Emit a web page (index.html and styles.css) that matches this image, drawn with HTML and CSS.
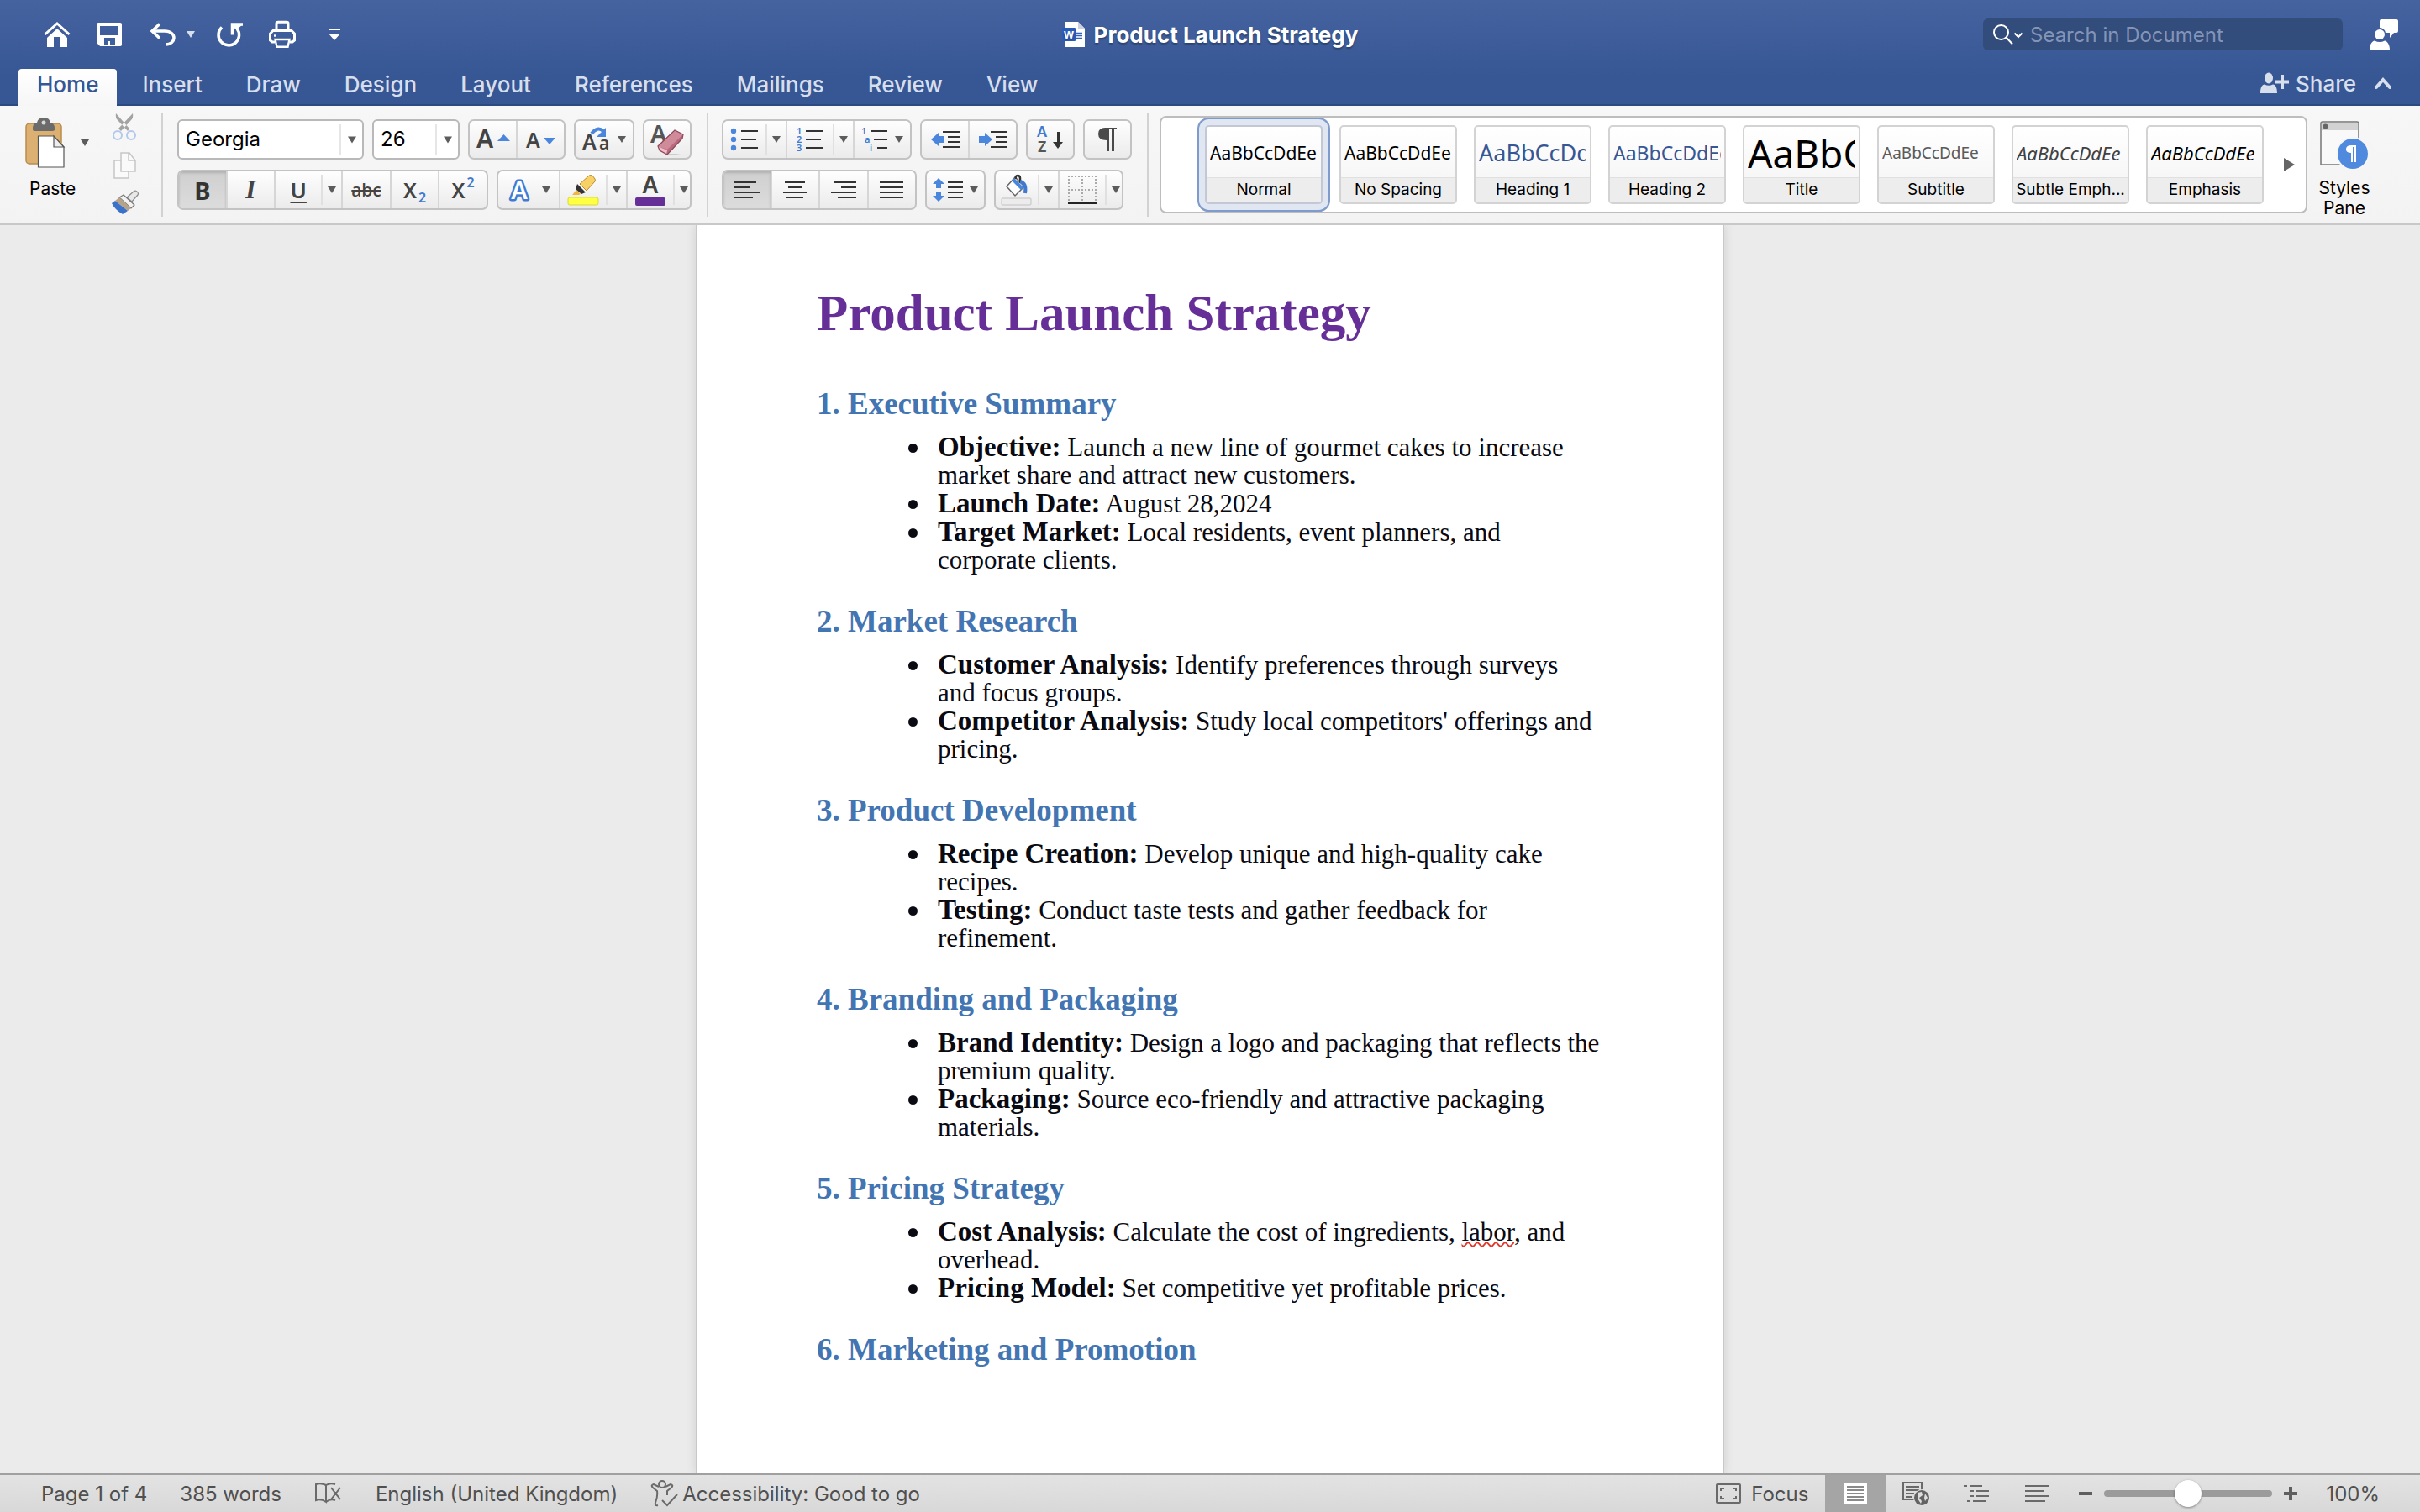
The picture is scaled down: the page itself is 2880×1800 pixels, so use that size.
FILE: index.html
```html
<!DOCTYPE html>
<html lang="en-GB">
<head>
	<meta charset="utf-8">
	<title>Product Launch Strategy</title>
	<link rel="stylesheet" href="styles.css">
</head>
<body>
	<svg class="defs" width="0" height="0" aria-hidden="true">
		<symbol id="caret" viewBox="0 0 10 8"><path d="M0 0h10L5 8z" fill="currentColor"/></symbol>
	</svg>

	<header class="top">
		<div class="titlebar">
			<div class="quick">
				<button class="q-home" aria-label="Home">
					<svg width="32" height="30" viewBox="0 0 32 30"><path d="M1.500 15L16 2l14.500 13" fill="none" stroke="#fff" stroke-width="3"/><path d="M16 8l12 11v11h-8V18h-8v12H4V19z" fill="#fff"/></svg>
				</button>
				<button class="q-save" aria-label="Save">
					<svg width="30" height="28" viewBox="0 0 30 28"><path d="M2 2h26v24H5l-3-3z" fill="none" stroke="#fff" stroke-width="4" stroke-linejoin="round"/><path d="M2 15h26v12H4l-2-2z" fill="#fff"/><path d="M9 25v-7h13v8h-6v-4h-3v4h-4z" fill="#3f5f9d"/></svg>
				</button>
				<button class="q-undo" aria-label="Undo">
					<svg width="32" height="28" viewBox="0 0 32 28"><path d="M12 1.500L3 10l9 8.500M3 10h15c15 0 14 16 1 16" fill="none" stroke="#fff" stroke-width="3.500"/></svg>
				</button>
				<button class="q-more" aria-label="Undo history"><svg width="10" height="8"><use href="#caret"/></svg></button>
				<button class="q-redo" aria-label="Repeat">
					<svg width="32" height="32" viewBox="0 0 32 32"><path d="M6 7.500A12.300 12.300 0 1 0 24 9L20 5" fill="none" stroke="#fff" stroke-width="3.500"/><path d="M18.500 16.500V4H31" fill="none" stroke="#fff" stroke-width="3.500"/><path d="M19 4h12l-7 6z" fill="#fff"/></svg>
				</button>
				<button class="q-print" aria-label="Print">
					<svg width="32" height="32" viewBox="0 0 32 32" fill="none" stroke="#fff" stroke-width="2.400"><path d="M9 11V3q0-1.800 2-1.800h10q2 0 2 1.800v8M7 25H4l-2.500-2v-8L5 11.500h22l3.500 3.500v8L28 25h-3" stroke-width="3"/><path d="M7.500 22h17l-2 8.800h-13z"/><path d="M6 17.500h2.500"/></svg>
				</button>
				<button class="q-custom" aria-label="Customise toolbar">
					<svg width="14" height="14" viewBox="0 0 14 14" fill="#fff"><path d="M0 0h14v2H0zM0 6h14l-7 8z"/></svg>
				</button>
			</div>
			<div class="doc-title">
				<svg width="28" height="30" viewBox="0 0 28 30"><path d="M4 0h15l8 8v22H4z" fill="#fff"/><path d="M19 0v8h8z" fill="#c9d2e2"/><path d="M17 13.500h7M17 16.500h7M17 19.500h7" stroke="#2f62bd" stroke-width="1.500"/><rect y="7" width="16" height="16" rx="1" fill="#2a5bb8"/><text x="8" y="20" text-anchor="middle" font-family="Inter, sans-serif" font-weight="700" font-size="12" fill="#fff">W</text></svg>
				<span>Product Launch Strategy</span>
			</div>
			<div class="title-right">
				<label class="search">
					<svg width="36" height="24" viewBox="0 0 36 24" fill="none" stroke="#fff" stroke-width="2"><circle cx="9.500" cy="9.500" r="8.500"/><path d="M15.500 15.500l7.500 8M25.500 10.500l4.500 4.500 4.500-4.500"/></svg>
					<input type="text" placeholder="Search in Document" aria-label="Search in Document">
				</label>
				<button class="feedback" aria-label="Feedback">
					<svg width="34" height="36" viewBox="0 0 34 36" fill="#fff"><path d="M14 0h18q2 0 2 2v12q0 2-2 2h-3l-5 6v-6h-5a7.500 7.500 0 0 0-7-6V2q0-2 2-2z"/><circle cx="12" cy="18" r="6"/><path d="M0 36c0-6 3-10 6-10.500q6 3 12 0c3 .5 6 4.500 6 10.500z"/></svg>
				</button>
			</div>
		</div>
		<div class="tabrow">
			<nav class="tabs">
				<a href="#" class="tab active">Home</a>
				<a href="#" class="tab">Insert</a>
				<a href="#" class="tab">Draw</a>
				<a href="#" class="tab">Design</a>
				<a href="#" class="tab">Layout</a>
				<a href="#" class="tab">References</a>
				<a href="#" class="tab">Mailings</a>
				<a href="#" class="tab">Review</a>
				<a href="#" class="tab">View</a>
			</nav>
			<div class="share-box">
				<button class="share">
					<svg width="34" height="26" viewBox="0 0 34 26" fill="#d7deec"><ellipse cx="10" cy="7" rx="5" ry="6.500"/><path d="M0 25c0-7 2-10 5-10.500q5 2.500 10 0c3 .5 5 3.500 5 10.500z"/><path d="M18 9.500h6V3h4v6.500h6v4h-6V20h-4v-6.500h-6z"/></svg>
					Share
				</button>
				<button class="collapse" aria-label="Collapse ribbon">
					<svg width="20" height="14" viewBox="0 0 20 14"><path d="M2 12l8-9 8 9" fill="none" stroke="#d7deec" stroke-width="4" stroke-linecap="round"/></svg>
				</button>
			</div>
		</div>
	</header>

	<div class="ribbon">
		<div class="clipboard">
			<button class="paste">
				<svg width="48" height="60" viewBox="0 0 48 60"><rect x="1" y="7" width="42" height="48" rx="4" fill="#dcb071" stroke="#b98c4c" stroke-width="1.500"/><path d="M9 15q-1-8 5-9 1-6 8-6t8 6q6 1 5 9-1 1-3 1H12q-2 0-3-1z" fill="#6b6b6b"/><circle cx="22" cy="6" r="2.500" fill="#d8d8d8"/><path d="M15.500 22H34l12 13v24H15.500z" fill="#fff" stroke="#555" stroke-width="1.200"/><path d="M34 22v13h12z" fill="#eee" stroke="#555" stroke-width="1.200"/></svg>
				<svg width="10" height="8"><use href="#caret"/></svg>
				<span>Paste</span>
			</button>
			<div class="clip-small">
				<button aria-label="Cut"><svg width="32" height="34" viewBox="0 0 32 34"><path d="M6 1q-1 5 2 8l12 13 2-3zM26 1q1 5-2 8L12 22l-3-3z" fill="#a3a3a3"/><g fill="none" stroke="#b3c9ec" stroke-width="2"><circle cx="8" cy="27" r="5"/><circle cx="24" cy="27" r="5"/></g></svg></button>
				<button aria-label="Copy"><svg width="32" height="32" viewBox="0 0 32 32" fill="#fafafa" stroke="#c6c6c6" stroke-width="1.500"><path d="M4 10h17v21H4z"/><path d="M12 1h10l7 9v13H12z"/><path d="M21 1v9h8" fill="none"/></svg></button>
				<button aria-label="Format painter"><svg width="34" height="30" viewBox="0 0 34 30"><path d="M19 9l8-7q3-2 5 1 1 2 0 3l-7 8z" fill="#e8e8e8" stroke="#8b8b8b" stroke-width="1.200"/><path d="M15 6l13 12-4 4L10 9z" fill="#f2f2f2" stroke="#777" stroke-width="1.200"/><path d="M10 9l14 13-4 3L5 13z" fill="#b5a48a"/><path d="M5 13l15 12-6 4Q5 24 1 16z" fill="#3a72c9"/></svg></button>
			</div>
		</div>

		<div class="sep"></div>

		<div class="rows">
			<div class="row">
				<div class="combo c-font">
					<select aria-label="Font"><option>Georgia</option></select>
					<span class="combo-arrow"><svg width="10" height="9"><use href="#caret"/></svg></span>
				</div>
				<div class="combo c-size">
					<select aria-label="Font size"><option>26</option></select>
					<span class="combo-arrow"><svg width="10" height="9"><use href="#caret"/></svg></span>
				</div>
				<div class="group g-116">
					<button aria-label="Increase font size"><svg width="40" height="34" viewBox="0 0 40 34"><text x="0" y="27" font-family="Noto Sans, sans-serif" font-weight="600" font-size="30" fill="#444">A</text><path d="M25 19l7.500-8 7.500 8z" fill="#4a86dc"/></svg></button>
					<button aria-label="Decrease font size"><svg width="36" height="34" viewBox="0 0 36 34"><text x="0" y="27" font-family="Noto Sans, sans-serif" font-weight="600" font-size="25" fill="#444">A</text><path d="M21 15h14l-7 8z" fill="#4a86dc"/></svg></button>
				</div>
				<div class="group g-72">
					<button class="with-caret" aria-label="Change case"><svg width="34" height="34" viewBox="0 0 34 34"><text x="0" y="29" font-family="Noto Sans, sans-serif" font-weight="600" font-size="25" fill="#444">A</text><text x="20" y="29" font-family="Noto Sans, sans-serif" font-weight="600" font-size="21" fill="#444">a</text><path d="M11 10q7-9 14-3" fill="none" stroke="#4a86dc" stroke-width="4"/><path d="M28 3v11H17z" fill="#4a86dc"/></svg><svg width="10" height="8"><use href="#caret"/></svg></button>
				</div>
				<div class="group g-58">
					<button aria-label="Clear formatting"><svg width="40" height="38" viewBox="0 0 40 38"><text x="0" y="23" font-family="Noto Sans, sans-serif" font-weight="600" font-size="29" fill="#555">A</text><path d="M18 36h18l-10 2z" fill="#ccc"/><path d="M9 27L29 8l10 5-1 5-18 19-9-5z" fill="#b8697b"/><path d="M9 27L29 8l10 5-19 18z" fill="#d08b9b"/><path d="M9 27l11 5-1 5-8-4z" fill="#f0bcc8"/><path d="M9 27L29 8l10 5-1 5-18 19-9-5z" fill="none" stroke="#8c4658" stroke-width="1.200"/></svg></button>
				</div>
			</div>
			<div class="row">
				<div class="group g-370">
					<button class="on t-bold">B</button>
					<button class="t-ital">I</button>
					<div class="split"><button class="t-under">U</button><button class="arrow" aria-label="Underline styles"><svg width="10" height="8"><use href="#caret"/></svg></button></div>
					<button class="t-strike">abc</button>
					<button class="t-sub">X<sub>2</sub></button>
					<button class="t-sup">X<sup>2</sup></button>
				</div>
				<div class="group g-232">
					<button class="with-caret" aria-label="Text effects"><svg width="30" height="34" viewBox="0 0 30 34"><text x="15" y="28" text-anchor="middle" font-family="Noto Sans, sans-serif" font-weight="600" font-size="29" fill="#fff" stroke="#3d7bd4" stroke-width="5" stroke-linejoin="round" paint-order="stroke">A</text></svg><svg width="10" height="8"><use href="#caret"/></svg></button>
					<div class="split"><button aria-label="Highlight"><svg width="38" height="38" viewBox="0 0 38 38"><path d="M6 25l5-6 5 5-2 1z" fill="#efb53c"/><path d="M12 12l10 10-5 2-7-6z" fill="#333"/><path d="M15 12L26 2q2-1 4 0l3 4q1 2 0 3L23 20z" fill="#f7d166" stroke="#b98b2e" stroke-width="1"/><rect x="1" y="28" width="36" height="9" rx="2" fill="#ffff43" stroke="#d9d93a"/></svg></button><button class="arrow" aria-label="Highlight colours"><svg width="10" height="8"><use href="#caret"/></svg></button></div>
					<div class="split"><button aria-label="Font colour"><svg width="38" height="38" viewBox="0 0 38 38"><text x="19" y="23" text-anchor="middle" font-family="Noto Sans, sans-serif" font-weight="600" font-size="28" fill="#444">A</text><rect x="1" y="28" width="36" height="10" rx="2" fill="#662f97"/></svg></button><button class="arrow" aria-label="Font colours"><svg width="10" height="8"><use href="#caret"/></svg></button></div>
				</div>
			</div>
		</div>

		<div class="sep"></div>

		<div class="rows">
			<div class="row">
				<div class="group g-226">
					<div class="split"><button aria-label="Bullets"><svg width="34" height="28" viewBox="0 0 34 28"><g fill="#4a86dc"><circle cx="4" cy="4" r="3.200"/><circle cx="4" cy="14" r="3.200"/><circle cx="4" cy="24" r="3.200"/></g><path d="M13 4h20M13 14h18M13 24h20" stroke="#333" stroke-width="2"/></svg></button><button class="arrow" aria-label="Bullet styles"><svg width="10" height="8"><use href="#caret"/></svg></button></div>
					<div class="split"><button aria-label="Numbering"><svg width="32" height="30" viewBox="0 0 32 30"><g font-family="Noto Sans, sans-serif" font-weight="600" font-size="11" fill="#3f7ad0"><text x="0" y="9">1</text><text x="0" y="19">2</text><text x="0" y="29">3</text></g><path d="M11 5h20M11 15h18M11 25h20" stroke="#333" stroke-width="2"/></svg></button><button class="arrow" aria-label="Number styles"><svg width="10" height="8"><use href="#caret"/></svg></button></div>
					<button class="with-caret" aria-label="Multilevel list"><svg width="32" height="30" viewBox="0 0 32 30"><g font-family="Noto Sans, sans-serif" font-weight="600" font-size="11" fill="#3f7ad0"><text x="0" y="9">1</text><text x="4" y="19">a</text><text x="10" y="29">i</text></g><path d="M11 5h20M15 15h16M19 25h12" stroke="#333" stroke-width="2"/></svg><svg width="10" height="8"><use href="#caret"/></svg></button>
				</div>
				<div class="group g-116">
					<button aria-label="Decrease indent"><svg width="34" height="24" viewBox="0 0 34 24"><path d="M0 12L9 4v4h7v8H9v4z" fill="#4a86dc"/><path d="M14 3h20M20 9h14M20 15h14M14 21h20" stroke="#333" stroke-width="2"/></svg></button>
					<button aria-label="Increase indent"><svg width="34" height="24" viewBox="0 0 34 24"><path d="M16 12L7 4v4H0v8h7v4z" fill="#4a86dc"/><path d="M14 3h20M20 9h14M20 15h14M14 21h20" stroke="#333" stroke-width="2"/></svg></button>
				</div>
				<div class="group g-58">
					<button aria-label="Sort"><svg width="32" height="36" viewBox="0 0 32 36"><g font-family="Noto Sans, sans-serif" font-size="18"><text x="0" y="15" fill="#3f7ad0">A</text><text x="1" y="33" fill="#555">Z</text></g><path d="M24 9v12h-5l6 8 6-8h-4V9z" fill="#333"/></svg></button>
				</div>
				<div class="group g-58">
					<button aria-label="Show formatting marks"><svg width="24" height="30" viewBox="0 0 24 30" fill="#4a4a4a"><path d="M9 1h14v2h-3v26h-3V3h-3v26h-3V16Q1 16 1 8.500 1 1 9 1z"/></svg></button>
				</div>
			</div>
			<div class="row">
				<div class="group g-232">
					<button class="on" aria-label="Align left"><svg width="30" height="24" viewBox="0 0 30 24"><path d="M0 3h26M0 9h18M0 15h30M0 21h22" stroke="#333" stroke-width="2"/></svg></button>
					<button aria-label="Centre"><svg width="30" height="24" viewBox="0 0 30 24"><path d="M3 3h24M7 9h16M1 15h28M5 21h20" stroke="#333" stroke-width="2"/></svg></button>
					<button aria-label="Align right"><svg width="30" height="24" viewBox="0 0 30 24"><path d="M4 3h26M12 9h18M0 15h30M8 21h22" stroke="#333" stroke-width="2"/></svg></button>
					<button aria-label="Justify"><svg width="30" height="24" viewBox="0 0 30 24"><path d="M1 3h28M1 9h28M1 15h28M1 21h28" stroke="#333" stroke-width="2"/></svg></button>
				</div>
				<div class="group g-72">
					<button class="with-caret" aria-label="Line spacing"><svg width="36" height="30" viewBox="0 0 36 30"><path d="M7 1l7 7h-4v5H4V8H0zM7 29l7-7h-4v-5H4v5H0z" fill="#4a86dc"/><path d="M18 6h18M18 12h18M18 18h18M18 24h18" stroke="#333" stroke-width="2"/></svg><svg width="10" height="8"><use href="#caret"/></svg></button>
				</div>
				<div class="group g-154">
					<div class="split"><button aria-label="Shading"><svg width="38" height="38" viewBox="0 0 38 38"><path d="M7 15L17 4l11 11-11 11z" fill="#fff" stroke="#666" stroke-width="1.500"/><path d="M13 8l3-3 11 11-3 3z" fill="#4a86dc"/><path d="M18 6q-1-4 2-4t3 3v6" fill="none" stroke="#333" stroke-width="2.500"/><path d="M23 9q8 2 6 14" fill="none" stroke="#3f7ad0" stroke-width="4"/><rect x="1" y="29" width="35" height="8" rx="2" fill="#ececec" stroke="#d0d0d0" stroke-width="1.500"/></svg></button><button class="arrow" aria-label="Shading colours"><svg width="10" height="8"><use href="#caret"/></svg></button></div>
					<div class="split"><button aria-label="Borders"><svg width="34" height="36" viewBox="0 0 34 36"><path d="M0 2h34M0 18h34M1 1v30M17 1v30M33 1v30" stroke="#aaa" stroke-width="2" stroke-dasharray="2 2" fill="none"/><path d="M0 34h34" stroke="#222" stroke-width="2"/></svg></button><button class="arrow" aria-label="Border styles"><svg width="10" height="8"><use href="#caret"/></svg></button></div>
				</div>
			</div>
		</div>

		<div class="sep"></div>

		<div class="gallery">
			<div class="styles">
				<button class="style selected"><span class="sample">AaBbCcDdEe</span><span class="name">Normal</span></button>
				<button class="style"><span class="sample">AaBbCcDdEe</span><span class="name">No Spacing</span></button>
				<button class="style"><span class="sample s-h1">AaBbCcDdEe</span><span class="name">Heading 1</span></button>
				<button class="style"><span class="sample s-h2">AaBbCcDdEe</span><span class="name">Heading 2</span></button>
				<button class="style"><span class="sample s-title">AaBbCcDdEe</span><span class="name">Title</span></button>
				<button class="style"><span class="sample s-subtitle">AaBbCcDdEe</span><span class="name">Subtitle</span></button>
				<button class="style"><span class="sample s-subtle">AaBbCcDdEe</span><span class="name">Subtle Emph...</span></button>
				<button class="style"><span class="sample s-emph">AaBbCcDdEe</span><span class="name">Emphasis</span></button>
			</div>
			<button class="gallery-next" aria-label="More styles"><svg width="14" height="16" viewBox="0 0 14 16"><path d="M0 0l13 8-13 8z" fill="#666"/></svg></button>
		</div>

		<button class="styles-pane">
			<svg width="58" height="58" viewBox="0 0 58 58"><path d="M1 52V3q0-2 2-2h41q2 0 2 2v49z" fill="#f9f9f9" stroke="#777" stroke-width="1.500"/><path d="M2 2h43v9H2z" fill="#d2d2d2"/><circle cx="6.500" cy="6.500" r="3" fill="#666"/><circle cx="39" cy="39" r="20" fill="#f6f6f6"/><circle cx="39" cy="39" r="18" fill="#4f8ade"/><path d="M37 29h6v20h-2V31h-2v18h-2V38q-6 0-6-4.500t6-4.500z" fill="#fff"/></svg>
			<span>Styles</span>
			<span>Pane</span>
		</button>
	</div>

	<main class="workspace">
		<article class="page">
			<h1>Product Launch Strategy</h1>

			<h2>1. Executive Summary</h2>
			<ul>
				<li><strong>Objective:</strong> Launch a new line of gourmet cakes to increase market share and attract new customers.</li>
				<li><strong>Launch Date:</strong> August 28,2024</li>
				<li><strong>Target Market:</strong> Local residents, event planners, and<br>corporate clients.</li>
			</ul>

			<h2>2. Market Research</h2>
			<ul>
				<li><strong>Customer Analysis:</strong> Identify preferences through surveys<br>and focus groups.</li>
				<li><strong>Competitor Analysis:</strong> Study local competitors' offerings and pricing.</li>
			</ul>

			<h2>3. Product Development</h2>
			<ul>
				<li><strong>Recipe Creation:</strong> Develop unique and high-quality cake<br>recipes.</li>
				<li><strong>Testing:</strong> Conduct taste tests and gather feedback for<br>refinement.</li>
			</ul>

			<h2>4. Branding and Packaging</h2>
			<ul>
				<li><strong>Brand Identity:</strong> Design a logo and packaging that reflects the premium quality.</li>
				<li><strong>Packaging:</strong> Source eco-friendly and attractive packaging<br>materials.</li>
			</ul>

			<h2>5. Pricing Strategy</h2>
			<ul>
				<li><strong>Cost Analysis:</strong> Calculate the cost of ingredients, <span class="misspelt">labor</span>, and<br>overhead.</li>
				<li><strong>Pricing Model:</strong> Set competitive yet profitable prices.</li>
			</ul>

			<h2>6. Marketing and Promotion</h2>
		</article>
	</main>

	<footer class="status">
		<div class="status-left">
			<span>Page 1 of 4</span>
			<span>385 words</span>
			<button aria-label="Proofing"><svg width="34" height="28" viewBox="0 0 34 28" fill="none" stroke="#6a6a6a" stroke-width="2"><path d="M14 4Q8 1 2 3v19q6-2 12 2zM14 4q5-3 11-1M14 24q5-4 11-2M20 7l11 14M31 7L20 21"/></svg></button>
			<span>English (United Kingdom)</span>
			<span class="access"><svg width="34" height="32" viewBox="0 0 34 32" fill="none" stroke="#6a6a6a" stroke-width="2"><circle cx="14" cy="5" r="4"/><path d="M10 8L4 5Q0 6 3 9l5 4q1 6-2 14-1 4 3 3M18 8l6-3q4 1 1 4l-5 4v5"/><path d="M14 24l6 6L32 17"/></svg>Accessibility: Good to go</span>
		</div>
		<div class="status-right">
			<button class="focus"><svg width="30" height="24" viewBox="0 0 30 24" fill="none" stroke="#6a6a6a" stroke-width="2"><rect x="1" y="1" width="28" height="22" rx="1"/><path d="M6 9V6h4M20 6h4v3M24 15v3h-4M10 18H6v-3"/></svg>Focus</button>
			<button class="view on" aria-label="Print layout"><svg width="28" height="26" viewBox="0 0 28 26"><rect width="28" height="26" rx="1" fill="#fff"/><path d="M4 5h20M4 9h20M4 13h20M4 17h20M4 21h20" stroke="#8a8a8a" stroke-width="2"/></svg></button>
			<button class="view" aria-label="Web layout"><svg width="32" height="28" viewBox="0 0 32 28"><path d="M1 1h22v20H1z" fill="none" stroke="#6a6a6a" stroke-width="2"/><path d="M4 6h16M4 10h16M4 14h10M4 18h8" stroke="#6a6a6a" stroke-width="2"/><circle cx="23" cy="19" r="10" fill="#dedede"/><circle cx="23" cy="19" r="9" fill="#636363"/><path d="M18 13l5-1 1 4-4 3 3 4-1 3-4-6zM27 14l3 5-3 4-1-4z" fill="#dedede"/></svg></button>
			<button class="view" aria-label="Outline"><svg width="30" height="22" viewBox="0 0 30 22"><path d="M0 2h4M7 2h15M8 8h4M15 8h15M8 14h4M15 14h15M4 20h4M11 20h15" stroke="#6a6a6a" stroke-width="2"/></svg></button>
			<button class="view" aria-label="Draft"><svg width="28" height="22" viewBox="0 0 28 22"><path d="M0 2h28M0 8h22M0 14h28M0 20h24" stroke="#6a6a6a" stroke-width="2"/></svg></button>
			<button class="zoom-btn" aria-label="Zoom out"><svg width="16" height="16" viewBox="0 0 16 16"><path d="M0 8h16" stroke="#5f5f5f" stroke-width="4"/></svg></button>
			<input class="zoom" type="range" min="0" max="200" value="100" aria-label="Zoom">
			<button class="zoom-btn" aria-label="Zoom in"><svg width="16" height="16" viewBox="0 0 16 16"><path d="M0 8h16M8 0v16" stroke="#5f5f5f" stroke-width="4"/></svg></button>
			<span class="percent">100%</span>
		</div>
	</footer>
</body>
</html>
```
FILE: styles.css
```css
* {
	box-sizing: border-box;
}

body {
	display: flex;
	flex-direction: column;
	height: 100vh;
	margin: 0;
	overflow: hidden;
	font-family: Inter, "Liberation Sans", sans-serif;
	background: #ebebeb;
}

button {
	padding: 0;
	border: 0;
	background: none;
	font: inherit;
	color: inherit;
}

svg {
	display: block;
	flex: none;
	overflow: visible;
}

.defs {
	position: absolute;
}

/* blue header */

.top {
	flex: none;
	color: #fff;
	background: linear-gradient(#45639f, #365694 75%, #365694);
	border-bottom: 2px solid #2c4a82;
}

.titlebar {
	display: grid;
	grid-template-columns: 1fr auto 1fr;
	align-items: center;
	height: 82px;
}

.quick {
	display: flex;
	align-items: center;
	padding-left: 52px;
}

.q-save { margin-left: 31px; }
.q-undo { margin-left: 33px; }
.q-more { margin-left: 12px; color: #d7deec; }
.q-redo { margin-left: 26px; }
.q-print { margin-left: 30px; }
.q-custom { margin-left: 39px; }

.doc-title {
	display: flex;
	align-items: center;
	gap: 10px;
	font-size: 26px;
	font-weight: 700;
	text-shadow: 0 2px 2px rgba(0, 0, 0, 0.3);
}

.title-right {
	display: flex;
	justify-content: flex-end;
	align-items: center;
	gap: 32px;
	padding-right: 26px;
}

.search {
	display: flex;
	align-items: center;
	gap: 8px;
	width: 428px;
	height: 38px;
	padding: 0 12px;
	border-radius: 6px;
	background: #324c7c;
}

.search input {
	flex: 1;
	min-width: 0;
	padding: 0;
	border: 0;
	outline: 0;
	background: none;
	color: #fff;
	font: 24px Inter, "Liberation Sans", sans-serif;
}

.search input::placeholder {
	color: #8494b7;
	opacity: 1;
}

.tabrow {
	display: flex;
	justify-content: space-between;
	height: 42px;
}

.tabs {
	display: flex;
	gap: 8px;
	padding-left: 22px;
}

.tab {
	height: 44px;
	padding: 0 22px;
	border-radius: 4px 4px 0 0;
	font-size: 26px;
	font-weight: 500;
	line-height: 38px;
	color: #d7deec;
	text-decoration: none;
}

.tab.active {
	color: #365694;
	background: linear-gradient(#fff, #f6f6f6);
}

.share-box {
	display: flex;
	align-items: center;
	gap: 22px;
	padding: 0 34px 8px 0;
}

.share {
	display: flex;
	align-items: center;
	gap: 8px;
	font-size: 26px;
	font-weight: 500;
	color: #d7deec;
}

/* ribbon */

.ribbon {
	display: flex;
	flex: none;
	align-items: center;
	height: 142px;
	padding: 0 46px 0 30px;
	background: linear-gradient(#f7f7f7, #f3f3f3);
	border-bottom: 2px solid #c8c8c8;
	color: #5c5c5c;
}

.clipboard {
	display: flex;
	gap: 26px;
	height: 124px;
}

.paste {
	display: grid;
	grid-template-columns: 48px 10px;
	column-gap: 18px;
	row-gap: 12px;
	align-content: start;
	align-items: center;
	padding-top: 6px;
}

.paste span {
	grid-column: 1 / -1;
	justify-self: start;
	padding-left: 5px;
	font-size: 21px;
	line-height: 26px;
	color: #000;
}

.clip-small {
	display: flex;
	flex-direction: column;
	justify-content: space-between;
	width: 32px;
	padding-bottom: 2px;
}

.sep {
	width: 2px;
	height: 124px;
	margin: 0 16px 0 18px;
	background: #d2d2d2;
}

.clipboard + .sep {
	margin: 0 17px 0 28px;
}

.rows {
	display: flex;
	flex-direction: column;
	gap: 12px;
}

.row {
	display: flex;
	gap: 10px;
}

.combo {
	display: flex;
	align-items: center;
	height: 48px;
	border: 2px solid #b9b9b9;
	border-radius: 6px;
	background: #fff;
}

.c-font { width: 222px; }
.c-size { width: 104px; }

.combo select {
	flex: 1;
	min-width: 0;
	height: 44px;
	padding: 0 8px 2px;
	border: 0;
	appearance: none;
	background: none;
	font: 24px Inter, "Liberation Sans", sans-serif;
	color: #000;
}

.combo-arrow {
	display: flex;
	justify-content: center;
	align-items: center;
	width: 27px;
	height: 36px;
	border-left: 2px solid #e6e6e6;
}

.group {
	display: flex;
	height: 48px;
	border: 2px solid #c3c3c3;
	border-radius: 7px;
	background: linear-gradient(#fefefe, #ebebeb);
	overflow: hidden;
	font-family: "Noto Sans", sans-serif;
	font-weight: 600;
	color: #5c5c5c;
}

.group > button,
.split > button {
	display: flex;
	flex: 1;
	justify-content: center;
	align-items: center;
	min-width: 0;
}

.group > * + * {
	border-left: 2px solid #d6d6d6;
}

.group .on {
	background: linear-gradient(#cfcfcf, #dcdcdc);
	box-shadow: inset 0 2px 3px #b0b0b0;
}

.group .with-caret {
	flex: 0 0 72px;
	gap: 12px;
}

.split {
	display: flex;
	align-items: center;
	flex: 0 0 80px;
}

.g-226 .split:first-child,
.g-154 .split:first-child {
	flex-basis: 74px;
}

.split .arrow {
	flex: 0 0 24px;
	height: 36px;
	border-left: 2px solid #e0e0e0;
}

.g-58 { width: 58px; }
.g-72 { width: 72px; }
.g-116 { width: 116px; }
.g-154 { width: 154px; }
.g-226 { width: 226px; }
.g-232 { width: 232px; }
.g-370 { width: 370px; }

.g-72 .with-caret,
.g-226 .with-caret {
	flex: 1;
	gap: 8px;
}

.group .t-bold {
	font-size: 29px;
	font-weight: 700;
	color: #333;
}

.group .t-ital {
	font: italic 700 31px "Liberation Serif", serif;
	color: #444;
}

.group .t-under {
	font-size: 26px;
	line-height: 40px;
	color: #444;
	text-decoration: underline;
	text-decoration-thickness: 2px;
	text-underline-offset: 4px;
}

.group .t-strike {
	font-size: 21px;
	font-weight: 500;
	color: #444;
	text-decoration: line-through;
}

.group .t-sub,
.group .t-sup {
	font-size: 25px;
	line-height: 30px;
	color: #444;
}

.t-sub sub,
.t-sup sup {
	padding-left: 2px;
	font-size: 16px;
	line-height: 16px;
	color: #3f7ad0;
}

.t-sub sub {
	padding-top: 18px;
}

.t-sup sup {
	padding-bottom: 18px;
}

/* style gallery */

.gallery {
	display: flex;
	flex: 1;
	align-items: center;
	justify-content: space-between;
	min-width: 0;
	height: 116px;
	margin-left: -3px;
	padding: 0 12px 0 52px;
	border: 2px solid #bdbdbd;
	border-radius: 8px;
	background: #fff;
}

.styles {
	display: flex;
	gap: 20px;
}

.style {
	display: flex;
	flex-direction: column;
	width: 140px;
	height: 94px;
	border: 2px solid #d3d3d3;
	border-radius: 5px;
	background: linear-gradient(#fff, #f7f7f7 66%);
	color: #000;
	overflow: hidden;
}

.style.selected {
	border-color: #c3c8d4;
	box-shadow: 0 0 0 7px #e0e6f2, 0 0 0 9px #7f9bcb;
}

.sample {
	align-self: stretch;
	height: 60px;
	margin: 0 4px;
	overflow: hidden;
	font: 21px/62px "Noto Sans", sans-serif;
	text-align: left;
	white-space: nowrap;
}

.sample.s-h1 { font-size: 27px; color: #365694; }
.sample.s-h2 { font-size: 23px; color: #365694; }
.sample.s-title { font-size: 46px; }
.sample.s-subtitle { font-size: 19px; color: #5a5a5a; }
.sample.s-subtle { font-size: 22px; font-style: italic; color: #404040; }
.sample.s-emph { font-size: 22px; font-style: italic; }

.name {
	align-self: stretch;
	flex: 1;
	border-top: 1px solid #e0e0e0;
	background: #ededed;
	font-size: 19px;
	line-height: 28px;
	text-align: center;
}

.styles-pane {
	display: flex;
	flex: 0 0 88px;
	flex-direction: column;
	align-items: center;
	height: 122px;
	padding-top: 9px;
	font-size: 21px;
	line-height: 24px;
	color: #000;
}

.styles-pane svg {
	margin-bottom: 10px;
}

/* document */

.workspace {
	flex: 1;
	min-height: 0;
	overflow: hidden;
	background: #ebebeb;
}

.page {
	width: 1224px;
	min-height: 100%;
	margin: 0 auto;
	padding: 69px 140px 0 142px;
	border: solid #c8c8c8;
	border-width: 0 2px;
	background: #fff;
	box-shadow: 0 0 12px rgba(0, 0, 0, 0.12);
	font-family: "Liberation Serif", serif;
	color: #0a0a12;
}

.page h1 {
	margin: 0 0 52px;
	font-size: 61px;
	line-height: 72px;
	color: #662f97;
}

.page h2 {
	margin: 0;
	font-size: 37px;
	line-height: 40px;
	color: #4375b2;
}

.page ul {
	margin: 15px 0 37px;
	padding-left: 144px;
	list-style: none;
}

.page li {
	font-size: 31px;
	line-height: 33px;
}

.page li + li {
	margin-top: 1px;
}

.page li::before {
	content: "";
	display: inline-block;
	width: 11px;
	height: 11px;
	margin: 0 24px 4px -35px;
	border-radius: 50%;
	background: #0a0a12;
}

.page strong {
	font-size: 33px;
	line-height: 30px;
}

.misspelt {
	text-decoration: underline wavy #e0372b 2px;
	text-decoration-skip-ink: none;
}

/* status bar */

.status {
	display: flex;
	flex: none;
	justify-content: space-between;
	height: 46px;
	padding-left: 49px;
	border-top: 2px solid #a0a0a0;
	background: linear-gradient(#e3e3e3, #d8d8d8);
	font-size: 24px;
	color: #505050;
}

.status-left,
.status-right {
	display: flex;
	align-items: center;
}

.status-left {
	gap: 39px;
}

.access,
.focus {
	display: flex;
	align-items: center;
	gap: 4px;
}

.focus {
	gap: 12px;
	margin-right: 20px;
}

.view {
	display: flex;
	justify-content: center;
	align-items: center;
	width: 72px;
	height: 44px;
}

.view.on {
	background: #a5a5a5;
}

.zoom-btn {
	margin: 0 14px;
}

.zoom {
	width: 200px;
	height: 32px;
	margin: 0;
	appearance: none;
	background: none;
}

.zoom::-webkit-slider-runnable-track {
	height: 8px;
	border-radius: 4px;
	background: #9b9b9b;
}

.zoom::-webkit-slider-thumb {
	appearance: none;
	width: 32px;
	height: 32px;
	margin-top: -12px;
	border-radius: 50%;
	background: #fff;
	box-shadow: 0 1px 3px rgba(0, 0, 0, 0.4);
}

.percent {
	margin: 0 48px 0 20px;
}
```
